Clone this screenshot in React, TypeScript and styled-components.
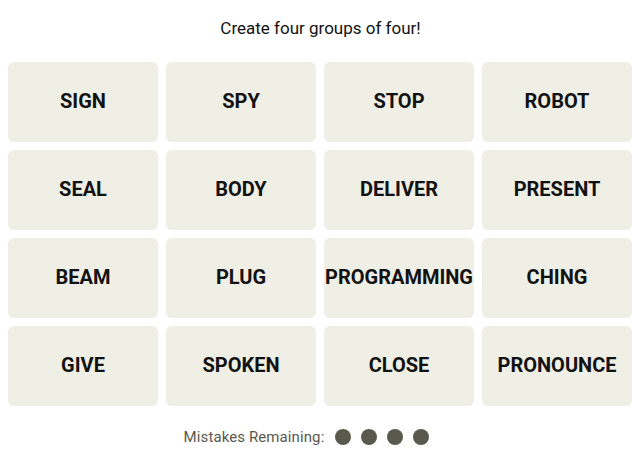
import React from "react";
import styled, { createGlobalStyle } from "styled-components";

const Global = createGlobalStyle`
  html, body { margin: 0; padding: 0; background: #fff; }
  body { font-family: Roboto, "Liberation Sans", sans-serif; color: #121212; }
`;

const Page = styled.div`
  width: 641px;
  padding: 0 8px;
  box-sizing: border-box;
  display: flex;
  flex-direction: column;
  align-items: stretch;
`;

const Title = styled.p`
  margin: 0;
  height: 62px;
  display: flex;
  align-items: center;
  justify-content: center;
  font-size: 17px;
  font-weight: 400;
  padding-bottom: 6px;
  box-sizing: border-box;
`;

const Grid = styled.div`
  display: grid;
  grid-template-columns: repeat(4, 150px);
  grid-auto-rows: 80px;
  gap: 8px;
`;

const Tile = styled.button`
  border: none;
  border-radius: 6px;
  background: #efefe6;
  color: #121212;
  font-family: Roboto, "Liberation Sans", sans-serif;
  font-weight: 700;
  font-size: 20px;
  text-transform: uppercase;
  padding: 0 0 2px 0;
  display: flex;
  align-items: center;
  justify-content: center;
  white-space: nowrap;
`;

const Mistakes = styled.div`
  display: flex;
  align-items: center;
  justify-content: center;
  gap: 10px;
  height: 62px;
  padding-right: 28px;
  box-sizing: border-box;
  font-size: 15px;
  letter-spacing: 0.1px;
  color: #5a594e;
`;

const Label = styled.span`
  margin-right: 1px;
`;

const Dot = styled.span`
  width: 16px;
  height: 16px;
  border-radius: 50%;
  background: #5a594e;
`;

const words = [
  "SIGN", "SPY", "STOP", "ROBOT",
  "SEAL", "BODY", "DELIVER", "PRESENT",
  "BEAM", "PLUG", "PROGRAMMING", "CHING",
  "GIVE", "SPOKEN", "CLOSE", "PRONOUNCE",
];

export default function App() {
  return (
    <>
      <Global />
      <Page>
        <Title>Create four groups of four!</Title>
        <Grid>
          {words.map((w) => (
            <Tile key={w}>{w}</Tile>
          ))}
        </Grid>
        <Mistakes>
          <Label>Mistakes Remaining:</Label>
          <Dot />
          <Dot />
          <Dot />
          <Dot />
        </Mistakes>
      </Page>
    </>
  );
}
